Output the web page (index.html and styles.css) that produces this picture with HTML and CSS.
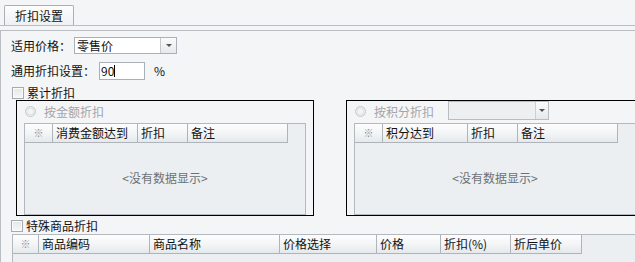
FILE: index.html
```html
<!DOCTYPE html>
<html lang="zh-CN">
<head>
    <meta charset="UTF-8">
    <title>折扣设置</title>
    <link rel="stylesheet" href="styles.css">
</head>
<body>
    <div class="tab-strip">
        <div class="tab">折扣设置</div>
    </div>

    <div class="panel">
        <div class="field-row row-price">
            <span class="label">适用价格：</span>
            <div class="combo price-combo">
                <span class="combo-text">零售价</span>
                <span class="combo-btn"><span class="arrow"></span></span>
            </div>
        </div>

        <div class="field-row row-rate">
            <span class="label">通用折扣设置：</span>
            <div class="text-input">90<span class="caret"></span></div>
            <span class="unit">%</span>
        </div>

        <div class="check-row row-total">
            <span class="checkbox"></span>
            <span>累计折扣</span>
        </div>

        <div class="groups">
            <div class="group">
                <div class="group-head">
                    <span class="radio"></span>
                    <span class="radio-label">按金额折扣</span>
                </div>
                <div class="grid small-grid">
                    <div class="grid-header">
                        <div class="cell cell-mark">※</div>
                        <div class="cell w85">消费金额达到</div>
                        <div class="cell w50">折扣</div>
                        <div class="cell w100">备注</div>
                    </div>
                    <div class="grid-empty">&lt;没有数据显示&gt;</div>
                </div>
            </div>

            <div class="group">
                <div class="group-head">
                    <span class="radio"></span>
                    <span class="radio-label">按积分折扣</span>
                    <div class="combo points-combo disabled">
                        <span class="combo-text"></span>
                        <span class="combo-btn"><span class="arrow"></span></span>
                    </div>
                </div>
                <div class="grid small-grid">
                    <div class="grid-header">
                        <div class="cell cell-mark">※</div>
                        <div class="cell w85">积分达到</div>
                        <div class="cell w50">折扣</div>
                        <div class="cell w100">备注</div>
                    </div>
                    <div class="grid-empty">&lt;没有数据显示&gt;</div>
                </div>
            </div>
        </div>

        <div class="check-row row-special">
            <span class="checkbox"></span>
            <span>特殊商品折扣</span>
        </div>

        <div class="grid wide-grid">
            <div class="grid-header">
                <div class="cell cell-mark narrow">※</div>
                <div class="cell" style="width: 111px">商品编码</div>
                <div class="cell" style="width: 130px">商品名称</div>
                <div class="cell" style="width: 97px">价格选择</div>
                <div class="cell" style="width: 64px">价格</div>
                <div class="cell" style="width: 70px">折扣(%)</div>
                <div class="cell" style="width: 71px">折后单价</div>
            </div>
        </div>
    </div>
</body>
</html>
```

FILE: styles.css
```css
* {
    margin: 0;
    padding: 0;
    box-sizing: border-box;
}

html, body {
    overflow: hidden;
}

body {
    font-family: "Noto Sans CJK SC", "Liberation Sans", sans-serif;
    font-size: 12px;
    line-height: 14px;
    color: #111;
    background-color: #f4f5f7;
    width: 635px;
    height: 262px;
}

/* ----------  TAB STRIP  ---------- */
.tab-strip {
    height: 26px;
    border-bottom: 1px solid #b9bec3;
    padding: 5px 0 0 4px;
}

.tab {
    width: 70px;
    height: 20px;
    border: 1px solid #aab0b6;
    border-bottom: none;
    border-radius: 2px 2px 0 0;
    background: linear-gradient(#fdfdfd, #eef0f2);
    padding: 3px 0 0 10px;
}

/* ----------  PANEL  ---------- */
.panel {
    margin-top: 4px;
    border-top: 1px solid #b9bec3;
    border-left: 1px solid #b9bec3;
    padding: 6px 0 0 10px;
    height: 232px;
    overflow: hidden;
}

.field-row {
    display: flex;
    align-items: center;
}

.row-price {
    height: 17px;
}

.row-price .label {
    width: 63px;
}

.row-rate {
    margin-top: 8px;
    height: 18px;
}

.row-rate .label {
    width: 88px;
}

.combo {
    display: flex;
    background-color: #fff;
    border: 1px solid #a9b0b7;
}

.price-combo {
    width: 103px;
    height: 17px;
}

.combo-text {
    flex: 1;
    padding-left: 2px;
    line-height: 15px;
}

.combo-btn {
    width: 16px;
    border-left: 1px solid #c3c8cd;
    background: linear-gradient(#fafbfb, #e6e9ec);
    display: flex;
    align-items: center;
    justify-content: center;
}

.arrow {
    width: 0;
    height: 0;
    border-left: 3px solid transparent;
    border-right: 3px solid transparent;
    border-top: 3px solid #555;
}

.text-input {
    width: 46px;
    height: 18px;
    background-color: #fff;
    border: 1px solid #a9b0b7;
    padding-left: 1px;
    line-height: 16px;
    display: flex;
    align-items: center;
}

.caret {
    width: 1px;
    height: 12px;
    background-color: #000;
}

.unit {
    margin-left: 9px;
}

/* ----------  CHECK ROWS  ---------- */
.check-row {
    display: flex;
    align-items: center;
    gap: 3px;
}

.row-total {
    margin-top: 6px;
    height: 13px;
    padding-left: 1px;
}

.row-special {
    margin-top: 4px;
    height: 11px;
}

.checkbox {
    width: 12px;
    height: 12px;
    border: 1px solid #a4aab0;
    background: linear-gradient(#e4e6e8, #f6f7f8);
    box-shadow: inset 0 0 0 1px #fbfbfb;
}

/* ----------  GROUP BOXES  ---------- */
.groups {
    display: flex;
    gap: 32px;
    margin: 1px 0 0 5px;
}

.group {
    width: 298px;
    height: 116px;
    border: 1px solid #000;
    flex-shrink: 0;
}

.group-head {
    height: 21px;
    display: flex;
    align-items: center;
    padding-left: 8px;
    color: #a3a6a9;
}

.radio {
    width: 11px;
    height: 11px;
    border-radius: 50%;
    border: 1px solid #c5c9cd;
    background: radial-gradient(circle, #f3f4f5 35%, #dfe1e3 40%, #eceeef 70%);
}

.radio-label {
    margin-left: 8px;
    width: 70px;
}

.points-combo {
    width: 101px;
    height: 19px;
    margin: -2px 0 0 4px;
    background-color: #eeeff0;
    border-color: #b8bdc2;
}

.points-combo .combo-btn {
    width: 13px;
    border-left-color: #ccd0d4;
}

/* ----------  GRIDS  ---------- */
.grid {
    border: 1px solid #b3b9bf;
    background-color: #eceff2;
}

.small-grid {
    width: 282px;
    height: 92px;
    margin: 1px 0 0 7px;
    display: flex;
    flex-direction: column;
}

.grid-header {
    display: flex;
    height: 19px;
}

.cell {
    height: 19px;
    border-right: 1px solid #aeb4ba;
    border-bottom: 1px solid #aeb4ba;
    background: linear-gradient(#fdfdfd, #f3f5f6 50%, #e5e9ec);
    padding: 2px 0 0 3px;
    white-space: nowrap;
    flex-shrink: 0;
}

.cell-mark {
    width: 28px;
    padding-left: 0;
    text-align: center;
    color: #8a8f94;
    font-size: 10px;
}

.cell-mark.narrow {
    width: 26px;
}

.w85 {
    width: 85px;
}

.w50 {
    width: 50px;
}

.w100 {
    width: 100px;
}

.grid-empty {
    flex: 1;
    display: flex;
    align-items: center;
    justify-content: center;
    color: #6e7174;
    padding-bottom: 2px;
}

.wide-grid {
    margin: 3px 0 0 1px;
    height: 40px;
    width: 640px;
}
```
